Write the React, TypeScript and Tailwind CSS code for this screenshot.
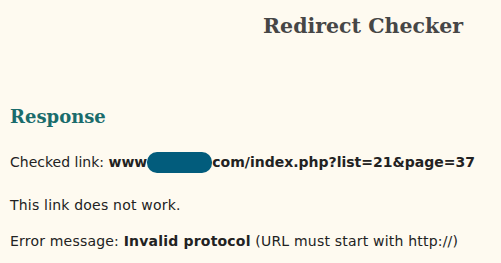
import React from 'react';

const serif = "font-['Georgia','DejaVu_Serif','Liberation_Serif',serif]";
const sans = "font-['Lucida_Grande','DejaVu_Sans','Verdana',sans-serif]";

function ResultLine({ children, className = '' }: { children: React.ReactNode; className?: string }) {
  return <p className={`text-[14px] leading-[20px] text-[#222] ${sans} ${className}`}>{children}</p>;
}

export default function App() {
  return (
    <div className="w-[501px] h-[263px] bg-[#fefaf0] overflow-hidden">
      <header className="flex justify-end pr-[38px] pt-[12px]">
        <h1 className={`text-[20.5px] leading-[28px] font-bold text-[#464646] ${serif}`}>Redirect Checker</h1>
      </header>

      <section className="px-[10px] pt-[65px]">
        <h2 className={`text-[18px] leading-[24px] font-bold text-[#1a6c6c] ${serif}`}>Response</h2>

        <ResultLine className="mt-[23px]">
          Checked link:{' '}
          <b>
            www
            <span className="inline-block w-[65px] h-[21px] rounded-[10px] bg-[#025c7c] align-[-6px]" />
            com/index.php?list=21&amp;page=37
          </b>
        </ResultLine>

        <ResultLine className="mt-[22px] tracking-[0.2px]">This link does not work.</ResultLine>

        <ResultLine className="mt-[16px] tracking-[0.2px]">
          Error message: <b>Invalid protocol</b> (URL must start with http://)
        </ResultLine>
      </section>
    </div>
  );
}
